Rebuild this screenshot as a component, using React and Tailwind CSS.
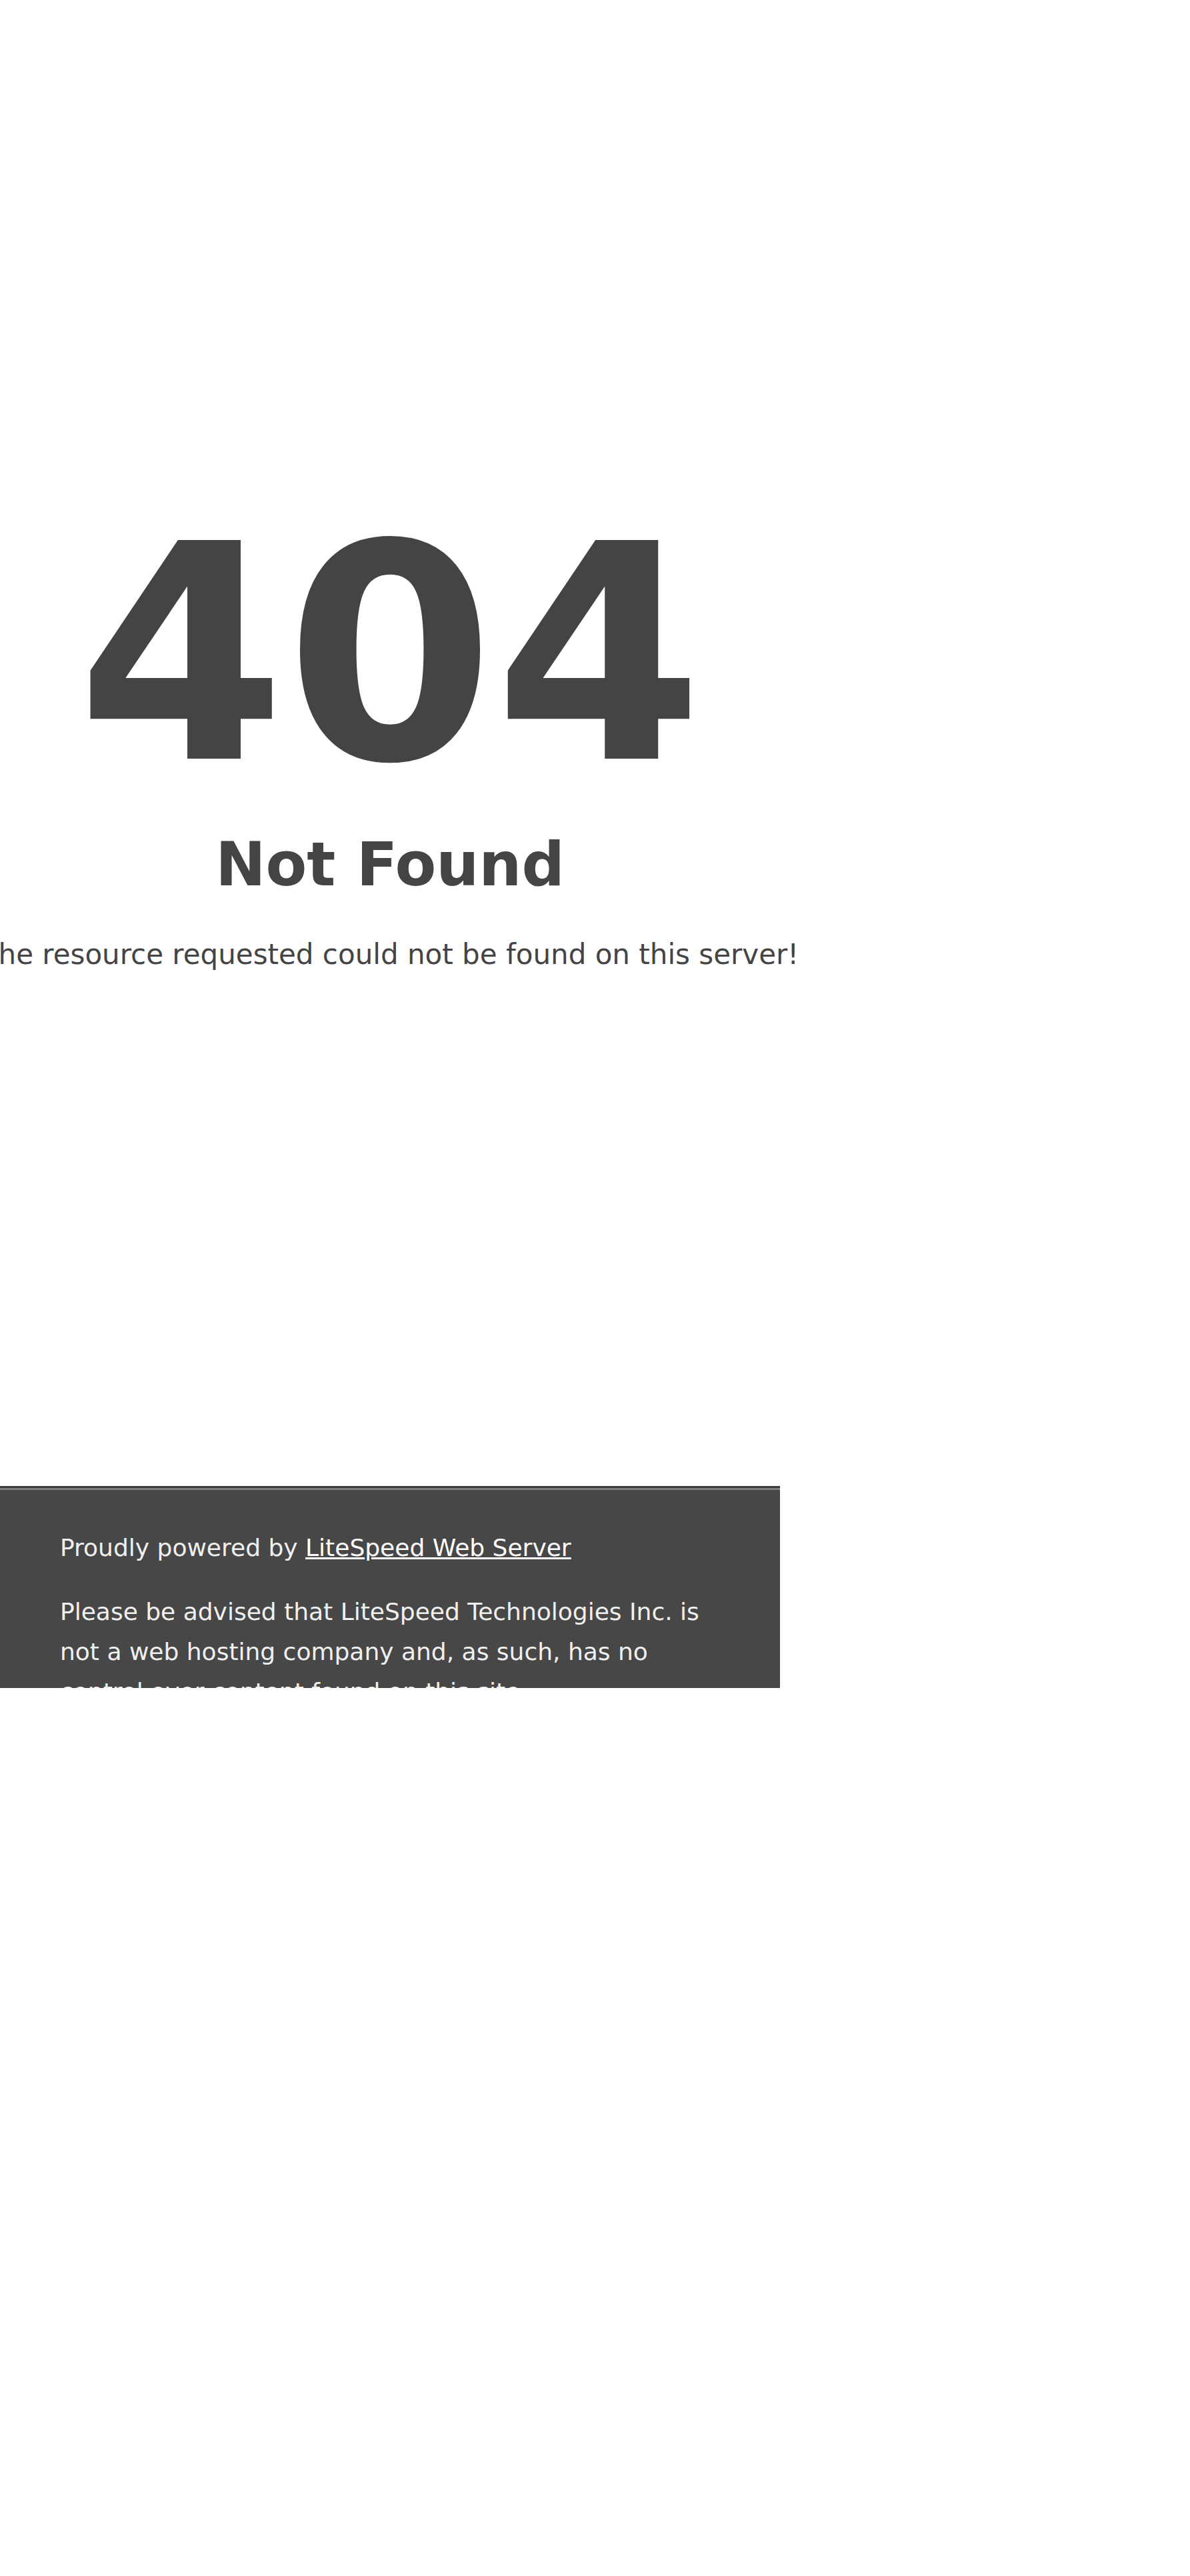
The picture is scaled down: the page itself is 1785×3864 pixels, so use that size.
import React from 'react';

// LiteSpeed 404 page, laid out at 390 css px wide and drawn at 3x
export default function App() {
    return (
        <div className="w-[1170px] bg-white text-[#444] font-['DejaVu_Sans',sans-serif] text-[42px] leading-[60px]">
            <div className="min-h-[2532px] pt-[757px] text-center">
                <h1 className="m-0 text-[450px] leading-[450px] font-bold">404</h1>
                <h2 className="mt-[60px] mb-[75px] text-[90px] leading-[60px] font-bold">Not Found</h2>
                <div className="flex justify-center">
                    <p className="whitespace-nowrap">The resource requested could not be found on this server!</p>
                </div>
            </div>
            <footer className="-mt-[303px] h-[303px] px-[90px] bg-[#474747] text-[#f0f0f0] text-[36px] leading-[60px] border-t-[3px] border-[rgba(0,0,0,0.15)] shadow-[inset_0_3px_0_rgba(255,255,255,0.3)]">
                <br />
                Proudly powered by <a href="#" className="text-white underline">LiteSpeed Web Server</a>
                <p className="my-[36px]">
                    Please be advised that LiteSpeed Technologies Inc. is not a web hosting company and, as such, has no control over content found on this site.
                </p>
            </footer>
        </div>
    );
}
